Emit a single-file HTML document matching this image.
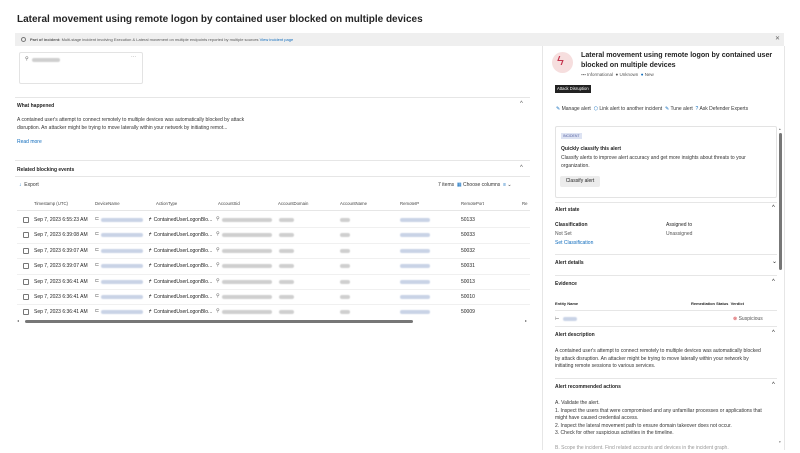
<!DOCTYPE html>
<html><head><meta charset="utf-8"><style>
*{margin:0;padding:0;box-sizing:border-box}
body{width:800px;height:450px;background:#fff;font-family:"Liberation Sans",sans-serif;color:#242424;position:relative;overflow:hidden;font-size:5px}
.a{position:absolute;white-space:nowrap}
.b{font-weight:bold}
.blue{color:#0f6cbd}
.blur{position:absolute;height:4px;background:#c9d3e6;border-radius:2px;filter:blur(.6px)}
.gblur{position:absolute;height:4px;background:#cfcfcf;border-radius:2px;filter:blur(.6px)}
.hl{position:absolute;height:1px;background:#e6e6e6}
.cb{position:absolute;width:6px;height:6px;border:1px solid #777;border-radius:1px}
</style></head><body>
<div class="a b" style="left:17px;top:14px;font-size:10px">Lateral movement using remote logon by contained user blocked on multiple devices</div>
<div class="a" style="left:15px;top:33px;width:769px;height:13px;background:#efefef"></div>
<div class="a" style="left:21px;top:37px;width:5px;height:5px;border:1px solid #777;border-radius:50%"></div>
<div class="a" style="left:30px;top:37px;font-size:4px;color:#555"><b>Part of incident:</b> Multi-stage incident involving Execution &amp; Lateral movement on multiple endpoints reported by multiple sources <span class="blue">View incident page</span></div>
<div class="a" style="left:775px;top:35px;font-size:6px;color:#666">✕</div>
<div class="a" style="left:19px;top:52px;width:124px;height:32px;border:1px solid #e3e3e3;border-radius:2px"></div>
<div class="a" style="left:25px;top:56px;font-size:5px;color:#666">⚲</div>
<div class="gblur" style="left:32px;top:58px;width:28px"></div>
<div class="a" style="left:131px;top:54px;color:#888">···</div>
<div class="hl" style="left:15px;top:97px;width:515px"></div>
<div class="a b" style="left:17px;top:103px;font-size:5px">What happened</div>
<div class="a" style="left:520px;top:101px;font-size:6px;color:#555">^</div>
<div class="a" style="left:17px;top:117px;font-size:5px;line-height:7.5px;color:#333">A contained user's attempt to connect remotely to multiple devices was automatically blocked by attack<br>disruption. An attacker might be trying to move laterally within your network by initiating remot...</div>
<div class="a blue" style="left:17px;top:139px">Read more</div>
<div class="hl" style="left:15px;top:160px;width:515px"></div>
<div class="a b" style="left:17px;top:167px">Related blocking events</div>
<div class="a" style="left:520px;top:165px;font-size:6px;color:#555">^</div>
<div class="hl" style="left:15px;top:176px;width:515px"></div>
<div class="a" style="left:19px;top:182px;color:#333"><span class="blue">↓</span>&nbsp; Export</div>
<div class="a" style="left:438px;top:182px;color:#333">7 items &nbsp;<span class="blue">▦</span> Choose columns &nbsp;<span class="blue">≡</span> ⌄</div>
<div class="a" style="top:201px;left:0;font-size:4.3px;color:#444">
<span class="a" style="left:34px">Timestamp (UTC)</span><span class="a" style="left:95px">DeviceName</span><span class="a" style="left:156px">ActionType</span><span class="a" style="left:218px">AccountSid</span><span class="a" style="left:278px">AccountDomain</span><span class="a" style="left:340px">AccountName</span><span class="a" style="left:400px">RemoteIP</span><span class="a" style="left:461px">RemotePort</span><span class="a" style="left:522px">Re</span></div>
<div class="hl" style="left:17px;top:210px;width:513px"></div>
<div style="position:absolute;left:0;top:0">
<div class="cb" style="left:23px;top:217px"></div><div class="a" style="left:34px;top:217px">Sep 7, 2023 6:55:23 AM</div><div class="a" style="left:95px;top:216px;color:#666">⊏</div><div class="blur" style="left:101px;top:218px;width:42px"></div><div class="a" style="left:148px;top:217px">↱ ContainedUserLogonBlo...</div><div class="a" style="left:216px;top:216px;color:#666">⚲</div><div class="gblur" style="left:222px;top:218px;width:50px"></div><div class="gblur" style="left:279px;top:218px;width:15px"></div><div class="gblur" style="left:340px;top:218px;width:10px"></div><div class="blur" style="left:400px;top:218px;width:30px"></div><div class="a" style="left:461px;top:217px">50133</div><div class="hl" style="left:17px;top:227px;width:513px;background:#f0f0f0"></div>
<div class="cb" style="left:23px;top:232px"></div><div class="a" style="left:34px;top:232px">Sep 7, 2023 6:39:08 AM</div><div class="a" style="left:95px;top:231px;color:#666">⊏</div><div class="blur" style="left:101px;top:233px;width:42px"></div><div class="a" style="left:148px;top:232px">↱ ContainedUserLogonBlo...</div><div class="a" style="left:216px;top:231px;color:#666">⚲</div><div class="gblur" style="left:222px;top:233px;width:50px"></div><div class="gblur" style="left:279px;top:233px;width:15px"></div><div class="gblur" style="left:340px;top:233px;width:10px"></div><div class="blur" style="left:400px;top:233px;width:30px"></div><div class="a" style="left:461px;top:232px">50033</div><div class="hl" style="left:17px;top:243px;width:513px;background:#f0f0f0"></div>
<div class="cb" style="left:23px;top:248px"></div><div class="a" style="left:34px;top:248px">Sep 7, 2023 6:39:07 AM</div><div class="a" style="left:95px;top:247px;color:#666">⊏</div><div class="blur" style="left:101px;top:249px;width:42px"></div><div class="a" style="left:148px;top:248px">↱ ContainedUserLogonBlo...</div><div class="a" style="left:216px;top:247px;color:#666">⚲</div><div class="gblur" style="left:222px;top:249px;width:50px"></div><div class="gblur" style="left:279px;top:249px;width:15px"></div><div class="gblur" style="left:340px;top:249px;width:10px"></div><div class="blur" style="left:400px;top:249px;width:30px"></div><div class="a" style="left:461px;top:248px">50032</div><div class="hl" style="left:17px;top:258px;width:513px;background:#f0f0f0"></div>
<div class="cb" style="left:23px;top:263px"></div><div class="a" style="left:34px;top:263px">Sep 7, 2023 6:39:07 AM</div><div class="a" style="left:95px;top:262px;color:#666">⊏</div><div class="blur" style="left:101px;top:264px;width:42px"></div><div class="a" style="left:148px;top:263px">↱ ContainedUserLogonBlo...</div><div class="a" style="left:216px;top:262px;color:#666">⚲</div><div class="gblur" style="left:222px;top:264px;width:50px"></div><div class="gblur" style="left:279px;top:264px;width:15px"></div><div class="gblur" style="left:340px;top:264px;width:10px"></div><div class="blur" style="left:400px;top:264px;width:30px"></div><div class="a" style="left:461px;top:263px">50031</div><div class="hl" style="left:17px;top:274px;width:513px;background:#f0f0f0"></div>
<div class="cb" style="left:23px;top:279px"></div><div class="a" style="left:34px;top:279px">Sep 7, 2023 6:36:41 AM</div><div class="a" style="left:95px;top:278px;color:#666">⊏</div><div class="blur" style="left:101px;top:280px;width:42px"></div><div class="a" style="left:148px;top:279px">↱ ContainedUserLogonBlo...</div><div class="a" style="left:216px;top:278px;color:#666">⚲</div><div class="gblur" style="left:222px;top:280px;width:50px"></div><div class="gblur" style="left:279px;top:280px;width:15px"></div><div class="gblur" style="left:340px;top:280px;width:10px"></div><div class="blur" style="left:400px;top:280px;width:30px"></div><div class="a" style="left:461px;top:279px">50013</div><div class="hl" style="left:17px;top:289px;width:513px;background:#f0f0f0"></div>
<div class="cb" style="left:23px;top:294px"></div><div class="a" style="left:34px;top:294px">Sep 7, 2023 6:36:41 AM</div><div class="a" style="left:95px;top:293px;color:#666">⊏</div><div class="blur" style="left:101px;top:295px;width:42px"></div><div class="a" style="left:148px;top:294px">↱ ContainedUserLogonBlo...</div><div class="a" style="left:216px;top:293px;color:#666">⚲</div><div class="gblur" style="left:222px;top:295px;width:50px"></div><div class="gblur" style="left:279px;top:295px;width:15px"></div><div class="gblur" style="left:340px;top:295px;width:10px"></div><div class="blur" style="left:400px;top:295px;width:30px"></div><div class="a" style="left:461px;top:294px">50010</div><div class="hl" style="left:17px;top:304px;width:513px;background:#f0f0f0"></div>
<div class="cb" style="left:23px;top:309px"></div><div class="a" style="left:34px;top:309px">Sep 7, 2023 6:36:41 AM</div><div class="a" style="left:95px;top:308px;color:#666">⊏</div><div class="blur" style="left:101px;top:310px;width:42px"></div><div class="a" style="left:148px;top:309px">↱ ContainedUserLogonBlo...</div><div class="a" style="left:216px;top:308px;color:#666">⚲</div><div class="gblur" style="left:222px;top:310px;width:50px"></div><div class="gblur" style="left:279px;top:310px;width:15px"></div><div class="gblur" style="left:340px;top:310px;width:10px"></div><div class="blur" style="left:400px;top:310px;width:30px"></div><div class="a" style="left:461px;top:309px">50009</div>
</div>
<div class="a" style="left:17px;top:318px;font-size:4px;color:#666">◂</div>
<div class="a" style="left:25px;top:320px;width:388px;height:3px;background:#777;border-radius:2px"></div>
<div class="a" style="left:525px;top:318px;font-size:4px;color:#666">▸</div>

<div class="a" style="left:542px;top:46px;width:243px;height:404px;border-left:1px solid #e6e6e6;border-right:1px solid #e6e6e6"></div>
<div class="a" style="left:552px;top:52px;width:21px;height:21px;border-radius:50%;background:#f6dede"></div>
<div class="a" style="left:557px;top:53px;font-size:13px;color:#c4314b">ϟ</div>
<div class="a b" style="left:581px;top:50px;font-size:7.1px;line-height:10px">Lateral movement using remote logon by contained user<br>blocked on multiple devices</div>
<div class="a" style="left:581px;top:72px;font-size:4.5px;color:#555"><span style="color:#777">▪▪▪</span> Informational &nbsp;● Unknown &nbsp;<span class="blue">●</span> New</div>
<div class="a" style="left:555px;top:85px;height:8px;padding:0 2px;background:#222;color:#fff;font-size:4.2px;line-height:8px">Attack Disruption</div>
<div class="a" style="left:556px;top:106px;font-size:5px;color:#333"><span class="blue">✎</span> Manage alert &nbsp;<span class="blue">⬡</span> Link alert to another incident &nbsp;<span class="blue">✎</span> Tune alert &nbsp;<span class="blue">?</span> Ask Defender Experts</div>
<div class="a" style="left:555px;top:126px;width:222px;height:72px;border:1px solid #e3e3e3;border-radius:2px"></div>
<div class="a" style="left:561px;top:133px;height:6px;padding:0 2px;background:#dde3f3;color:#5560a0;font-size:3.5px;line-height:6px">INCIDENT</div>
<div class="a b" style="left:561px;top:146px">Quickly classify this alert</div>
<div class="a" style="left:561px;top:155px;line-height:7.5px;color:#333">Classify alerts to improve alert accuracy and get more insights about threats to your<br>organization.</div>
<div class="a" style="left:560px;top:176px;width:40px;height:11px;background:#ececec;border-radius:2px;text-align:center;line-height:11px">Classify alert</div>
<div class="hl" style="left:555px;top:202px;width:222px"></div>
<div class="a b" style="left:555px;top:207px">Alert state</div><div class="a" style="left:772px;top:205px;font-size:6px">^</div>
<div class="a b" style="left:555px;top:222px">Classification</div><div class="a" style="left:666px;top:222px">Assigned to</div>
<div class="a" style="left:555px;top:231px;color:#555">Not Set</div><div class="a" style="left:666px;top:231px;color:#555">Unassigned</div>
<div class="a blue" style="left:555px;top:240px">Set Classification</div>
<div class="hl" style="left:555px;top:254px;width:222px"></div>
<div class="a b" style="left:555px;top:260px">Alert details</div><div class="a" style="left:772px;top:258px;font-size:6px">⌄</div>
<div class="hl" style="left:555px;top:275px;width:222px"></div>
<div class="a b" style="left:555px;top:281px">Evidence</div><div class="a" style="left:772px;top:279px;font-size:6px">^</div>
<div class="a b" style="left:555px;top:301px;font-size:4px">Entity Name</div><div class="a b" style="left:691px;top:301px;font-size:4px">Remediation Status &nbsp;Verdict</div>
<div class="hl" style="left:555px;top:310px;width:222px"></div>
<div class="a" style="left:555px;top:316px;color:#666">⊢</div><div class="blur" style="left:563px;top:317px;width:14px"></div>
<div class="a" style="left:733px;top:316px;color:#555"><span style="color:#d13438">⊗</span> Suspicious</div>
<div class="hl" style="left:555px;top:326px;width:222px"></div>
<div class="a b" style="left:555px;top:332px">Alert description</div><div class="a" style="left:772px;top:330px;font-size:6px">^</div>
<div class="a" style="left:555px;top:348px;line-height:7.7px;color:#333">A contained user's attempt to connect remotely to multiple devices was automatically blocked<br>by attack disruption. An attacker might be trying to move laterally within your network by<br>initiating remote sessions to various services.</div>
<div class="hl" style="left:555px;top:378px;width:222px"></div>
<div class="a b" style="left:555px;top:384px">Alert recommended actions</div><div class="a" style="left:772px;top:382px;font-size:6px">^</div>
<div class="a" style="left:555px;top:400px;line-height:7.5px;color:#333">A. Validate the alert.<br>1. Inspect the users that were compromised and any unfamiliar processes or applications that<br>might have caused credential access.<br>2. Inspect the lateral movement path to ensure domain takeover does not occur.<br>3. Check for other suspicious activities in the timeline.<br><br><span style="color:#999">B. Scope the incident. Find related accounts and devices in the incident graph.</span></div>
<div class="a" style="left:779px;top:133px;width:3px;height:137px;background:#777;border-radius:2px"></div>
<div class="a" style="left:779px;top:127px;font-size:3.5px;color:#777">▴</div>
<div class="a" style="left:779px;top:440px;font-size:3.5px;color:#777">▾</div>
</body></html>
